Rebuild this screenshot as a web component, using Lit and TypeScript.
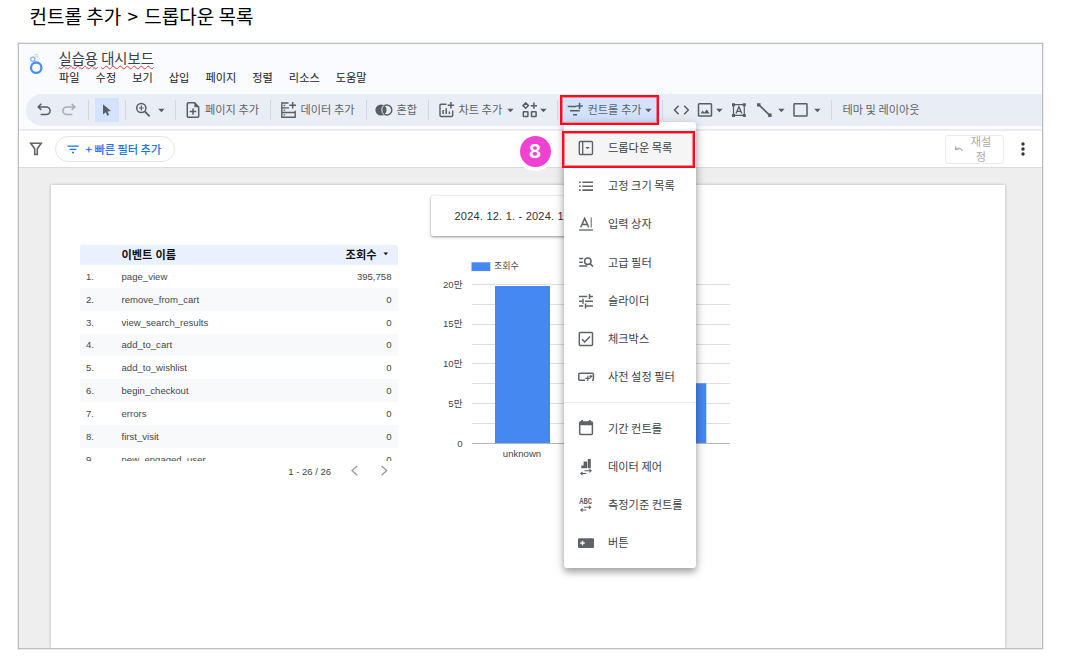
import { LitElement, html, svg, css } from "lit";
import { customElement } from "lit/decorators.js";

const frame = (w: number, h: number, body: unknown) =>
  html`<svg width=${w} height=${h} viewBox="0 0 ${w} ${h}" fill="none" stroke="currentColor" stroke-width="1.5">${body}</svg>`;

const icon = {
  undo: frame(16, 16, svg`<path d="M5.3 1.800 2.200 4.900l3.100 3.100M2.500 4.900h7.800a3.700 3.700 0 0 1 0 7.600H4.600"/>`),
  redo: frame(16, 16, svg`<path d="M10.700 1.800l3.100 3.100-3.100 3.100M13.500 4.900H5.700a3.700 3.700 0 0 0 0 7.600h5.700"/>`),
  cursor: frame(24, 24, svg`<path fill="currentColor" stroke="none" d="M8 6.300v10.200l2.700-2.300 1.700 3.600 1.800-.9-1.700-3.500 3.400-.3z"/>`),
  zoomIn: frame(16, 16, svg`<circle cx="6.300" cy="6" r="4.600"/><path d="M9.700 9.400l5 5" stroke-width="1.900"/><path d="M6.300 3.600v4.800M3.900 6h4.800" stroke-width="1.200"/>`),
  page: frame(16, 18, svg`<path d="M9.700 1.800H3.300a1 1 0 0 0-1 1v12.400a1 1 0 0 0 1 1h9.400a1 1 0 0 0 1-1V6z"/><path d="M9.400 1.300v5h4.800z" fill="currentColor" stroke="none"/><path d="M8 7.400v6.400M4.800 10.600h6.400"/>`),
  data: frame(17, 18, svg`<path d="M8.500 2H1.800v14.200h13.400v-4.600H1.800M1.800 6.900h7.200M1.800 11.500h13.400V9.800" stroke-width="1.400"/><path d="M12.700 1v6.600M9.400 4.300H16"/><path d="M3.600 4.500h1.600M3.600 9.200h1.600M3.600 13.900h1.600" stroke-width="1.300"/>`),
  blend: frame(18, 14, svg`<circle cx="6" cy="7" r="5.600" fill="currentColor" stroke="none"/><circle cx="11.800" cy="7" r="5"/><path d="M8.900 2.400a6 6 0 0 0 0 9.200" stroke="#e9eef6" stroke-width="1"/>`),
  chart: frame(17, 18, svg`<path d="M8.500 3.200H3a1 1 0 0 0-1 1v10.300a1 1 0 0 0 1 1h10.700a1 1 0 0 0 1-1V9.600" stroke-width="1.400"/><path d="M12.900 1v6.400M9.700 4.200h6.400"/><path d="M5.100 9v4M8.200 7.200V13M11.400 10.600V13" stroke-width="1.500"/>`),
  community: frame(16, 16, svg`<path d="M3.700.9l2.700 2.700-2.700 2.700L1 3.600zM11.900.600v6.200M8.800 3.700H15" stroke-width="1.500"/><rect x="1.300" y="9.700" width="4.600" height="4.700" rx=".5"/><rect x="9.500" y="9.700" width="4.600" height="4.700" rx=".5"/>`),
  control: frame(17, 16, svg`<path d="M.7 4.500h8.600M3 8.700h9.700M6 12.700h4" stroke-width="1.500"/><path d="M12.600.800v6.400M9.400 4h6.400"/>`),
  code: frame(17, 12, svg`<path d="M5.600 1.700 1.500 6l4.100 4.300M11.200 1.700 15.300 6l-4.100 4.300"/>`),
  image: frame(17, 16, svg`<rect x="1.500" y="1.700" width="13" height="12.400" rx=".8"/><path d="M3.600 11.600l2-3 1.700 1.800 2.500-3 2.800 4.200z" fill="currentColor" stroke="none"/>`),
  textBox: frame(16, 16, svg`<path d="M2.500 2.700h10.800v10.700H2.500z" stroke-width="1.200"/><path d="M1 1.200h3v3H1zM11.800 1.200h3v3h-3zM1 11.900h3v3H1zM11.800 11.900h3v3h-3z" fill="currentColor" stroke="none"/><path d="M5 11.600 7.900 4.700l2.900 6.900M6 9.300h3.800" stroke-width="1.300"/>`),
  line: frame(17, 16, svg`<path d="M3 3l10.800 10.300" stroke-width="1.700"/><path d="M1 1.200h3.500v3.300H1zM12.200 11.600h3.400v3.300h-3.400z" fill="currentColor" stroke="none"/>`),
  rect: frame(16, 16, svg`<rect x="1" y="1.700" width="13" height="12.400" rx=".6"/>`),
  caret: html`<svg width="7" height="5" viewBox="0 0 7 5"><path d="M.2.700h6.400L3.400 4.200z" fill="currentColor"/></svg>`,
  funnel: frame(14, 16, svg`<path d="M1.700 2.200h10.500L8.300 7.800v5.700H5.700V7.800z" stroke-width="1.600"/>`),
  filterLines: frame(12, 9, svg`<path d="M.4 1.100h11.200M2.600 4.300h6.800M5 7.500h2" stroke-width="1.300"/>`),
  reset: frame(10, 8, svg`<path d="M1.500 1.200v3.300h3.300M1.800 4.200A4 4 0 0 1 8.400 5.800" stroke-width="1.100"/>`),
};

const menuIcon = {
  dropdown: frame(16, 16, svg`<rect x="1.300" y="1.500" width="13.200" height="13" rx="1" stroke-width="1.400"/><path d="M4.700 1.500v13" stroke-width="1.300"/><path d="M7.300 6.900h4.600L9.600 9.300z" fill="currentColor" stroke="none"/>`),
  list: frame(16, 16, svg`<path d="M4.400 4.300H15M4.400 8.200H15M4.400 12.100H15" stroke-width="1.600"/><path d="M1 4.300h1.700M1 8.200h1.700M1 12.100h1.700" stroke-width="1.600"/>`),
  input: frame(16, 16, svg`<path d="M2.700 11.300 6.700 2.400l4 8.900M4.100 8.600h5.200" stroke-width="1.500"/><path d="M13.200 1.500v10" stroke-width="1"/><path d="M1 14h14" stroke-width="1.300"/>`),
  advanced: frame(16, 16, svg`<circle cx="9.800" cy="7.200" r="3.200" stroke-width="1.500"/><path d="M12 9.600l3 3M1.200 4.500h4M1.200 8.300h3.600M1.200 12.100h8" stroke-width="1.500"/>`),
  slider: frame(16, 16, svg`<path d="M1 3.500h8.300M11 3.500h4M1 8.300h3.300M7 8.300h8M1 13h4.300M7 13h8" stroke-width="1.500"/><path d="M11.500 1v5M5 5.800v5M7.500 10.600v5" stroke-width="1.500"/>`),
  checkbox: frame(16, 16, svg`<rect x="1.300" y="1.500" width="13.200" height="13" rx="1"/><path d="M4 8.300l2.700 2.600 5.300-5.500"/>`),
  preset: frame(18, 12, svg`<path d="M7 9.200H1.500a1 1 0 0 1-.7-1V3.300a1 1 0 0 1 1-1h12.600a1 1 0 0 1 1 1v5a1 1 0 0 1-1.300 1" stroke-width="1.500"/><path d="M9.800 4.800v5.200M7.300 7.400h5M12.800 3.900v3M11.300 5.400h3" stroke-width="1.200"/>`),
  calendar: frame(16, 18, svg`<rect x="1.700" y="3" width="12.700" height="12.600" rx="1"/><path d="M1.500 2.700h13v3.600h-13zM3.300 1h1.800v2H3.300zM10.900 1h1.800v2h-1.800z" fill="currentColor" stroke="none"/>`),
  dataControl: frame(16, 18, svg`<path d="M3.300 7.500h3v2.800h-3zM5.600 3.400h3.600v6.900H5.600zM9.800.900h3v9.400h-3z" fill="currentColor" stroke="none"/><path d="M6.500 12.800h6.300M3 15.500h5.300M11.400 11.200l1.700 1.600-1.700 1.600M4.500 13.900l-1.700 1.600 1.700 1.600" stroke-width="1.100"/>`),
  dimension: frame(16, 18, svg`<text x="1.300" y="7.600" textLength="12.800" lengthAdjust="spacingAndGlyphs" font-family="Liberation Mono" font-weight="700" font-size="9" fill="currentColor" stroke="none">ABC</text><path d="M6 11.300h6.500M2.800 14h5.500M11 9.700l1.700 1.600-1.700 1.600M4.500 12.400 2.800 14l1.700 1.600" stroke-width="1.100"/>`),
  button: frame(16, 12, svg`<rect x="0" y="1.200" width="16" height="9.800" rx="1" fill="currentColor" stroke="none"/><path d="M4.500 3.800v4.400M2.300 6h4.400" stroke="#fff" stroke-width="1.300"/>`),
};

const menuGroups = [
  [
    ["dropdown", "드롭다운 목록"],
    ["list", "고정 크기 목록"],
    ["input", "입력 상자"],
    ["advanced", "고급 필터"],
    ["slider", "슬라이더"],
    ["checkbox", "체크박스"],
    ["preset", "사전 설정 필터"],
  ],
  [
    ["calendar", "기간 컨트롤"],
    ["dataControl", "데이터 제어"],
    ["dimension", "측정기준 컨트롤"],
    ["button", "버튼"],
  ],
] as [keyof typeof menuIcon, string][][];

const events = [
  ["page_view", "395,758"],
  ["remove_from_cart", "0"],
  ["view_search_results", "0"],
  ["add_to_cart", "0"],
  ["add_to_wishlist", "0"],
  ["begin_checkout", "0"],
  ["errors", "0"],
  ["first_visit", "0"],
  ["new_engaged_user", "0"],
];

@customElement("control-menu")
class ControlMenu extends LitElement {
  static styles = css`
    :host {
      display: block;
      box-sizing: border-box;
      padding: 6.5px 0 6px;
      background: #fff;
      border-radius: 3px;
      box-shadow: 0 4px 6px rgba(0, 0, 0, 0.26), 0 2px 12px rgba(0, 0, 0, 0.2);
      color: #3c4043;
      font-size: 11.2px;
    }
    .item {
      display: flex;
      align-items: center;
      height: 38.25px;
      padding-left: 14px;
      white-space: nowrap;
    }
    .item.active { background: #f5f5f5; }
    .glyph { display: flex; width: 30px; color: #5f6368; }
    .text { padding-bottom: 1.5px; }
    .group + .group { border-top: 1.5px solid #efefef; margin-top: 5.5px; padding-top: 6.5px; }
    svg { display: block; }
  `;
  render() {
    return menuGroups.map(
      (group, g) => html`<div class="group">
        ${group.map(
          ([key, label], i) => html`<div class="item ${g + i === 0 ? "active" : ""}">
            <span class="glyph">${menuIcon[key]}</span><span class="text">${label}</span>
          </div>`
        )}
      </div>`
    );
  }
}

@customElement("event-table")
class EventTable extends LitElement {
  static styles = css`
    :host { display: block; font-size: 9.58px; color: #464646; }
    .row { display: grid; grid-template-columns: 41.500px 1fr auto; align-items: center; height: 22.850px; padding-right: 6.500px; }
    .row:nth-child(even) { background: #f8f9fb; }
    .num { padding-left: 6px; }
    .head { height: 20.500px; background: #e9f0fe; color: #111; font-weight: 700; font-size: 11.200px; border-radius: 2px 2px 0 0; padding-right: 9.500px; }
    .head span { position: relative; top: -1px; }
    .metric { display: flex; align-items: center; gap: 6px; }
    .body { height: 195.500px; overflow: hidden; }
    .pager { display: flex; justify-content: flex-end; align-items: center; height: 21.500px; padding-right: 9px; color: #464646; font-size: 9.500px; }
    .chev { margin-left: 19px; }
    .chev + .chev { margin-left: 21px; }
    svg { display: block; }
  `;
  render() {
    return html`
      <div class="row head">
        <span></span><span>이벤트 이름</span>
        <span class="metric">조회수 <svg width="6" height="4" viewBox="0 0 6 4"><path d="M.5.500h4.600L2.800 3.200z" fill="#111" /></svg></span>
      </div>
      <div class="body">
        ${events.map(
          ([name, value], i) => html`<div class="row"><span class="num">${i + 1}.</span><span>${name}</span><span>${value}</span></div>`
        )}
      </div>
      <div class="pager">
        <span>1 - 26 / 26</span>
        <svg class="chev" width="9" height="12" viewBox="0 0 9 12" fill="none" stroke="#9a9a9a" stroke-width="1.300"><path d="M7.300 1 2 5.500l5.300 4.800" /></svg>
        <svg class="chev" width="9" height="12" viewBox="0 0 9 12" fill="none" stroke="#9a9a9a" stroke-width="1.300"><path d="M1.500 1 6.800 5.500l-5.300 4.800" /></svg>
      </div>
    `;
  }
}

@customElement("view-chart")
class ViewChart extends LitElement {
  static styles = css`
    :host { display: block; }
    svg { display: block; }
    .label { font-size: 9.600px; fill: #464646; }
    .legend { font-size: 9px; }
    .end { text-anchor: end; }
    .mid { text-anchor: middle; }
    .bar { fill: #4688f1; }
    .grid { stroke: #dedede; stroke-width: 1; }
    .axis { stroke: #b5b5b5; stroke-width: 1; }
  `;
  render() {
    const ticks = ["20만", "15만", "10만", "5만", "0"];
    const lines = [34.5, 54.5, 74.5, 94.5, 113.5, 133.5, 153.5, 173.5];
    return html`<svg width="310" height="220" viewBox="0 0 310 220">
      <rect class="bar" x="40.500" y="12.300" width="18.800" height="8.800" />
      <text class="label legend" x="63" y="19">조회수</text>
      ${lines.map((y) => svg`<path class="grid" d="M41 ${y}H299" />`)}
      ${ticks.map((t, i) => svg`<text class="label end" x="31.500" y=${37.6 + i * 39.75}>${t}</text>`)}
      <rect class="bar" x="64" y="36" width="55" height="157.500" />
      <rect class="bar" x="220" y="133.300" width="55.300" height="60.200" />
      <path class="axis" d="M41 193.500H299" />
      <text class="label mid" x="91" y="206.500">unknown</text>
    </svg>`;
  }
}

@customElement("app-root")
class AppRoot extends LitElement {
  static styles = css`
    :host {
      display: block;
      position: relative;
      box-sizing: border-box;
      width: 1068px;
      height: 670px;
      overflow: hidden;
      background: #fff;
      font-family: "Liberation Sans", "Noto Sans CJK KR", sans-serif;
      color: #3c4043;
    }
    svg { display: block; flex: none; }
    .caption {
      height: 43px;
      padding-left: 29.500px;
      font: 400 19px/32px "Noto Sans CJK KR", sans-serif;
      color: #000;
      box-sizing: border-box;
    }
    .gt { margin: 0 2px; }
    .window {
      display: flex;
      flex-direction: column;
      box-sizing: border-box;
      width: 1025px;
      height: 606px;
      margin-left: 17.500px;
      border: 1px solid #bdbdbd;
      box-shadow: 0 0 0 1px rgba(189, 189, 189, 0.3);
      overflow: hidden;
    }
    .top { height: 85px; background: #f9fbff; border-bottom: 2px solid #ebecef; flex: none; }
    .brand { display: flex; height: 50px; }
    .logo { margin: 8px 0 0 9px; }
    .titles { margin-left: 15px; padding-top: 4px; }
    .doc { font: 400 14.300px/20px "Noto Sans CJK KR", sans-serif; white-space: nowrap; }
    .misspelt { text-decoration: underline wavy #f03a3a 1px; text-underline-offset: 1px; text-decoration-skip-ink: none; }
    .menus { display: flex; gap: 16px; font: 400 11.200px/16px "Noto Sans CJK KR", sans-serif; color: #222; margin: 1px 0 0 0.500px; }
    .toolbar {
      display: grid;
      grid-template-columns:
        25px 27px 7px 30px 10px 23px 17px 10px 20.5px 64.5px 10px 21px 65px 9px 22px 31px 10px 21px
        48px 15px 18px 17px 4px 101px 11px 24.5px 18.5px 15px 25px 22px 15px 21.5px 16.5px 12px auto;
      align-items: center;
      height: 32px;
      margin-left: 7px;
      padding-left: 10px;
      border-radius: 16px 0 0 16px;
      background: #e9eef6;
      color: #5f6368;
      font: 400 11.200px/16px "Noto Sans CJK KR", sans-serif;
      white-space: nowrap;
    }
    .toolbar svg { color: #5a5d62; }
    .label { padding-bottom: 2px; }
    .sep { width: 1px; height: 20px; background: #d3d8e0; }
    .dim { opacity: 0.45; }
    .picked { width: 24px; height: 24px; background: #d3e3fd; }
    .open { display: flex; align-items: center; box-sizing: border-box; width: 97px; height: 28px; padding-left: 6px; background: #d3e3fd; }
    .open .label { width: 57.500px; margin-left: 4px; }
    .filters { display: flex; align-items: center; height: 36px; border-bottom: 1px solid #dcdcdc; flex: none; padding-left: 10px; }
    .filters > svg { color: #5f6368; }
    .chip {
      display: flex; align-items: center; gap: 7px; box-sizing: border-box; width: 120px; height: 26px; margin-left: 12px; padding-left: 11px;
      border: 1px solid #e3e5e8; border-radius: 13px; color: #1a73e8; font: 500 11.200px/16px "Noto Sans CJK KR", sans-serif; white-space: nowrap;
    }
    .reset {
      display: flex; align-items: center; box-sizing: border-box; width: 59px; height: 29px; margin-left: auto; padding-left: 8px; gap: 7px;
      border: 1px solid #ececec; border-radius: 3px; color: #aaa; font: 400 11.200px/15.500px "Noto Sans CJK KR", sans-serif; text-align: center;
    }
    .reset .word { width: 21px; word-break: break-all; }
    .kebab { margin: 0 17px 0 17px; }
    .canvas { flex: 1; display: flex; background: #eee; padding: 17px 36.500px 0 32.500px; min-height: 0; }
    .sheet { flex: 1; display: flex; background: #fff; box-shadow: 0 0 3px rgba(0, 0, 0, 0.25); padding-left: 29px; }
    .table { width: 318px; margin-top: 59.500px; font-family: "Liberation Sans", "Noto Sans CJK KR", sans-serif; }
    .right { margin-left: 33px; padding-top: 11px; }
    .date {
      display: flex; align-items: center; box-sizing: border-box; width: 220px; height: 40px; padding-left: 23.500px; border-radius: 2px;
      box-shadow: 0 1px 3px rgba(0, 0, 0, 0.45); font-size: 11px; letter-spacing: 0.220px; color: #333; white-space: nowrap;
    }
    .chart { margin-top: 14px; }
    .menu { position: absolute; left: 564px; top: 122px; width: 132px; height: 446px; font-family: "Noto Sans CJK KR", sans-serif; }
    .mark { position: absolute; box-sizing: border-box; border: 2px solid #ff0a1c; box-shadow: inset 0 0 0 1px rgba(255, 10, 28, 0.45); }
    .mark-button { left: 560px; top: 95px; width: 99px; height: 30px; }
    .mark-item { left: 562px; top: 131px; width: 133px; height: 37px; }
    .step {
      position: absolute; left: 519.500px; top: 135.500px; width: 31px; height: 31px; border-radius: 50%; background: #f042d2; color: #fff;
      font: 700 19px/31px Inter, sans-serif; text-align: center; box-shadow: 0 0 0 4px #fff;
    }
  `;

  render() {
    const sep = html`<i class="sep"></i>`;
    const caret = icon.caret;
    return html`
      <div class="caption">컨트롤 추가 <span class="gt">&gt;</span> 드롭다운 목록</div>
      <div class="window">
        <div class="top">
          <div class="brand">
            <svg class="logo" width="16" height="24" viewBox="0 0 16 24" fill="none">
              <circle cx="8.200" cy="15.700" r="5.200" stroke="#4a8df6" stroke-width="2.300" />
              <circle cx="4.800" cy="7.300" r="2.100" stroke="#7fb0f8" stroke-width="1.300" />
              <circle cx="8.300" cy="3.700" r="1.500" stroke="#bfd7fb" stroke-width="1.100" />
            </svg>
            <div class="titles">
              <div class="doc"><span class="misspelt">실습용</span> <span class="misspelt">대시보드</span></div>
              <div class="menus">
                ${["파일", "수정", "보기", "삽입", "페이지", "정렬", "리소스", "도움말"].map((m) => html`<span>${m}</span>`)}
              </div>
            </div>
          </div>
          <div class="toolbar">
            ${icon.undo}<span class="dim">${icon.redo}</span>${sep}
            <span class="picked">${icon.cursor}</span>${sep}
            ${icon.zoomIn}${caret}${sep}
            ${icon.page}<span class="label">페이지 추가</span>${sep}
            ${icon.data}<span class="label">데이터 추가</span>${sep}
            ${icon.blend}<span class="label">혼합</span>${sep}
            ${icon.chart}<span class="label">차트 추가</span>${caret}
            ${icon.community}${caret}${sep}
            <span class="open">${icon.control}<span class="label">컨트롤 추가</span>${caret}</span>${sep}
            ${icon.code}${icon.image}${caret}${icon.textBox}${icon.line}${caret}${icon.rect}${caret}${sep}
            <span class="label">테마 및 레이아웃</span>
          </div>
        </div>
        <div class="filters">
          ${icon.funnel}
          <div class="chip">${icon.filterLines}<span>+ 빠른 필터 추가</span></div>
          <div class="reset">${icon.reset}<span class="word">재설정</span></div>
          <svg class="kebab" width="4" height="14" viewBox="0 0 4 14" fill="#333"><circle cx="2" cy="2" r="1.700" /><circle cx="2" cy="7" r="1.700" /><circle cx="2" cy="12" r="1.700" /></svg>
        </div>
        <div class="canvas">
          <div class="sheet">
            <event-table class="table"></event-table>
            <div class="right">
              <div class="date">2024. 12. 1. - 2024. 12. 31.</div>
              <view-chart class="chart"></view-chart>
            </div>
          </div>
        </div>
      </div>
      <control-menu class="menu"></control-menu>
      <div class="mark mark-button"></div>
      <div class="mark mark-item"></div>
      <div class="step">8</div>
    `;
  }
}
